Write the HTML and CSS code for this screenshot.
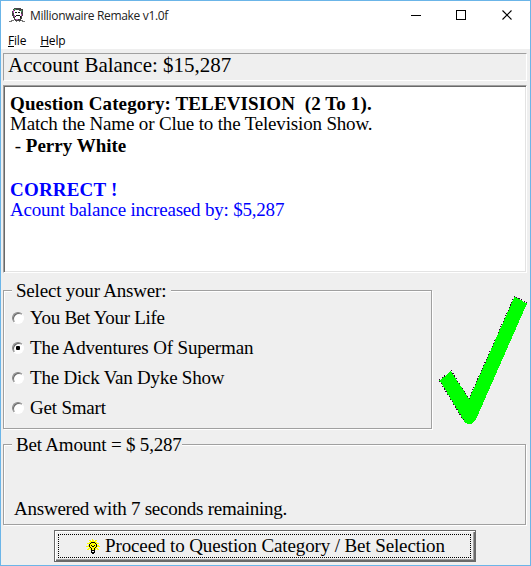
FILE: index.html
```html
<!DOCTYPE html>
<html lang="en">
<head>
<meta charset="utf-8">
<title>Millionwaire Remake v1.0f</title>
<link rel="stylesheet" href="styles.css">
</head>
<body>
<div class="window">
  <header class="titlebar">
    <svg class="app-icon" width="16" height="16" viewBox="0 0 16 16" shape-rendering="crispEdges">
      <path d="M5 1h7v1h2v7h-1v3h-1v2H6v-1H5v-2H4V9H3V4h1V2h1z" fill="#444"/>
      <path d="M6 3h4v1h2v5h-1v3H8v1H7v-1H6v-2H5V4h1z" fill="#fff"/>
      <path d="M4 3h1v3H4zM5 8h1v2H5zM12 7h1v2h-1zM7 12h2v1H7z" fill="#c050c0"/>
      <path d="M5 2h2v1H5zM12 3h1v2h-1z" fill="#48a060"/>
      <path d="M6 5h2v1H6zM9 5h2v1H9zM7 8h4v1h1v2h-1V9H7v1H6V9h1z" fill="#111"/>
      <path d="M2 13h3v1H2zM0 14h3v1H0zM12 13h2v1h-2zM13 14h3v1h-3zM7 14h1v1H7zM10 14h1v1h-1z" fill="#777"/>
    </svg>
    <span class="title">Millionwaire Remake v1.0f</span>
    <div class="controls">
      <svg width="11" height="11" shape-rendering="crispEdges"><path d="M0 5.500h10" stroke="#000"/></svg>
      <svg width="11" height="11" shape-rendering="crispEdges"><path d="M.5.5h9v9h-9z" fill="none" stroke="#000"/></svg>
      <svg class="close" width="11" height="11"><path d="M.5.5l9 9M9.500.5l-9 9" stroke="#000" stroke-width="1.1"/></svg>
    </div>
  </header>
  <nav class="menu"><span class="file"><u>F</u>ile</span><span class="help"><u>H</u>elp</span></nav>
  <main class="client">
    <div class="balance"><span>Account Balance: $15,287</span></div>
    <div class="memo">
      <p class="category"><b>Question Category: TELEVISION&nbsp; (2 To 1).</b></p>
      <p class="prompt">Match the Name or Clue to the Television Show.</p>
      <p class="clue">&nbsp;- <b>Perry White</b></p>
      <p class="spacer">&nbsp;</p>
      <p class="blue correct"><b>CORRECT !</b></p>
      <p class="blue increase">Acount balance increased by: $5,287</p>
    </div>
    <div class="answer-row">
      <section class="group answers">
        <h2 class="legend">Select your Answer:</h2>
        <div class="option"><i class="radio"></i><span class="o1">You Bet Your Life</span></div>
        <div class="option"><i class="radio on"></i><span class="o2">The Adventures Of Superman</span></div>
        <div class="option"><i class="radio"></i><span class="o3">The Dick Van Dyke Show</span></div>
        <div class="option"><i class="radio"></i><span class="o4">Get Smart</span></div>
      </section>
      <svg class="check" width="91" height="132" viewBox="0 0 91 132">
        <path d="M2.500 85.500L14 76L32 104L77.500 1.500L90 8.500L40 122Q37 129 33 129Q29 129 27 126z" fill="#0f0" shape-rendering="crispEdges"/>
        <path d="M2.500 85L14 75.500L32 103.500L77.500 1L90 8M2.500 86L27 126" fill="none" stroke="#303" stroke-width="1" stroke-dasharray="1 2" shape-rendering="crispEdges"/>
      </svg>
    </div>
    <section class="group bet">
      <h2 class="legend">Bet Amount = $ 5,287</h2>
      <p class="remaining">Answered with 7 seconds remaining.</p>
    </section>
    <button class="proceed">
      <span class="focus">
        <svg class="bulb" width="14" height="16" viewBox="0 0 14 16" shape-rendering="crispEdges">
          <path d="M6 0h1v1h1v1h1V1h2v1h-1v1h1v1h2v1h-2v1h2v1h1v1h-3v1h1v1h1v1h-2v-1h-1v1H4v-1H3v1H1v-1h1V9h1V8H0V7h2V6h1V5H1V4h2V3h1V2H3V1h2v1h1z" fill="#ff0"/>
          <path d="M5 3h4v1H5zM4 4h1v1H4zM9 4h1v1H9zM3 5h1v3H3zM10 5h1v3h-1zM4 8h1v1H4zM9 8h1v1H9zM5 9h1v5H5zM8 9h1v5H8zM6 11h2v1H6zM6 13h2v2H6zM5 6h1v1H5zM8 6h1v1H8zM6 7h2v1H6z"/>
        </svg>
        <span class="button-text">Proceed to Question Category / Bet Selection</span>
      </span>
    </button>
  </main>
</div>
</body>
</html>
```

FILE: styles.css
```css
* { box-sizing: border-box; }
body { margin: 0; font-family: "Liberation Serif", serif; font-size: 19px; color: #000; }
p, h2 { margin: 0; font-size: inherit; font-weight: inherit; white-space: nowrap; }
.window { width: 531px; height: 566px; border: 1px solid #6bb5e8; background: #efefef; overflow: hidden; }
.titlebar { display: flex; height: 30px; background: #fff; padding-left: 8px; font: 12px/30px "Open Sans", sans-serif; color: #222; }
.app-icon { margin-top: 6px; }
.title { margin-left: 5px; white-space: nowrap; letter-spacing: -.33px; }
.controls { margin: 9px 17px 0 auto; display: flex; gap: 34px; }
.close { margin-left: 1px; }
.menu { display: flex; gap: 14px; height: 18px; padding-left: 7px; background: #fff; font: 12px/20px "Open Sans", sans-serif; letter-spacing: -.2px; }
.client { padding: 4px 3px 0 2px; }
.balance { height: 28px; border: 1px solid; border-color: #a0a0a0 #fff #fff #a0a0a0; padding-left: 4px; font-size: 21px; line-height: 23px; }
.memo { height: 188px; margin-top: 4px; border: 1px solid; border-color: #a0a0a0 #fff #fff #a0a0a0; box-shadow: inset 1px 1px #696969, inset -1px -1px #e3e3e3; background: #fff; padding: 7px 6px; line-height: 21px; }
.spacer { height: 22px; }
.clue { line-height: 23px; }
.category { height: 20px; letter-spacing: .12px; }
.prompt { letter-spacing: -.17px; }
.correct { height: 20px; letter-spacing: .2px; }
.increase { letter-spacing: -.2px; }
.blue { color: #00f; }
.answer-row { display: flex; margin-top: 17px; }
.group { border: 1px solid #a0a0a0; box-shadow: 1px 1px #fff, inset 1px 1px #fff; }
.answers { flex: none; width: 429px; height: 139px; }
.legend { width: max-content; background: #efefef; line-height: 20px; letter-spacing: -.2px; }
.answers .legend { margin: -10px 0 0 8px; padding: 0 5px 0 4px; }
.option { display: flex; align-items: center; height: 30px; padding-left: 8px; }
.answers .legend + .option { margin-top: 2px; }
.o1 { letter-spacing: -.29px; }
.o2 { letter-spacing: -.16px; }
.o3 { letter-spacing: -.22px; }
.o4 { letter-spacing: -.2px; }
.radio { width: 12px; height: 12px; margin-right: 6px; flex: none; border-radius: 50%; border: 1px solid; border-color: #888 #fff #fff #888; background: #fff; box-shadow: inset 1px 1px #696969; display: grid; place-items: center; }
.on::after { content: ""; width: 4px; height: 4px; background: #000; border-radius: 1px; }
.check { margin: 5px 0 -5px 5px; flex: none; }
.bet { width: 523px; height: 81px; margin-top: 15px; }
.bet .legend { margin: -10px 0 0 8px; padding: 0 0 0 4px; }
.remaining { margin: 44px 0 0 10px; line-height: 20px; letter-spacing: -.24px; }
.proceed { display: block; width: 422px; height: 32px; margin: 5px 0 0 51px; padding: 3px; font: inherit; color: #000; background: #efefef; border: 1px solid #696969; box-shadow: inset 1px 1px #fff, inset -1px -1px #696969, inset -2px -2px #a0a0a0; }
.focus { display: flex; height: 24px; width: 413px; border: 1px dotted #000; padding-left: 27px; line-height: 22px; white-space: nowrap; letter-spacing: -.12px; }
.bulb { flex: none; margin: 4px 5px 0 0; }
```
